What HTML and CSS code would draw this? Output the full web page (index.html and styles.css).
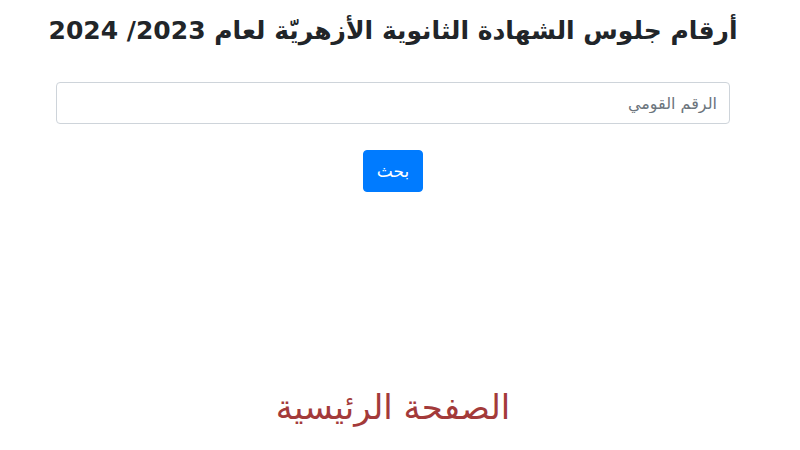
FILE: index.html
```html
<!DOCTYPE html>
<html lang="ar" dir="rtl">
<head>
<meta charset="utf-8">
<link rel="stylesheet" href="styles.css">
</head>
<body>
<main class="page">
  <h1 class="title">أرقام جلوس الشهادة الثانوية الأزهريّة لعام 2023/ 2024</h1>
  <form class="search">
    <input class="field" type="text" placeholder="الرقم القومي">
    <button class="btn" type="button">بحث</button>
  </form>
  <a class="home" href="#">الصفحة الرئيسية</a>
</main>
</body>
</html>
```
FILE: styles.css
```css
html, body {
  margin: 0;
  padding: 0;
  background: #fff;
}
body {
  font-family: "DejaVu Sans", "Noto Sans", sans-serif;
  color: #212529;
}
.page {
  width: 786px;
  margin: 0 14px 0 0;
  display: flex;
  flex-direction: column;
  align-items: center;
}
.title {
  margin: 11px 0 0;
  font-size: 25px;
  font-weight: 600;
  line-height: 40px;
  text-align: center;
}
.search {
  margin-top: 31px;
  width: 674px;
  display: flex;
  flex-direction: column;
  align-items: center;
}
.field {
  box-sizing: border-box;
  width: 674px;
  height: 42px;
  border: 1px solid #ced4da;
  border-radius: 4px;
  padding: 6px 12px;
  font-family: inherit;
  font-size: 16px;
  color: #495057;
}
.field::placeholder {
  color: #6c757d;
}
.btn {
  margin-top: 26px;
  width: 60px;
  height: 42px;
  background: #007bff;
  color: #fff;
  border: 1px solid #007bff;
  border-radius: 4px;
  font-family: inherit;
  font-size: 17px;
  padding: 0;
}
.home {
  margin-top: 193px;
  font-size: 34px;
  color: #a33a3a;
  text-decoration: none;
  line-height: 44px;
}
```
